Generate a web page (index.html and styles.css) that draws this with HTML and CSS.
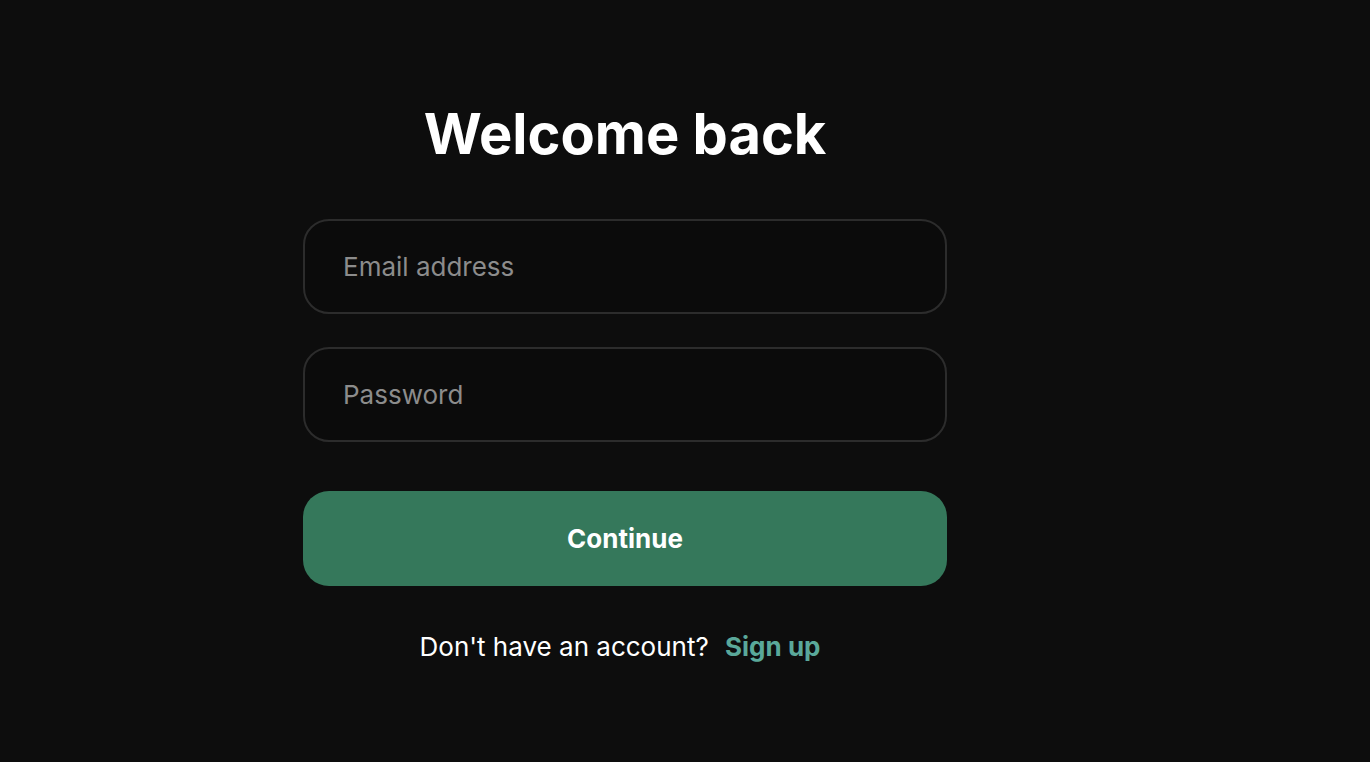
FILE: index.html
```html
<!DOCTYPE html>
<html lang="en">
<head>
<meta charset="utf-8">
<title>Welcome back</title>
<link rel="stylesheet" href="styles.css">
</head>
<body>
<main class="page">
  <form class="auth">
    <h1 class="auth-title">Welcome back</h1>
    <div class="fields">
      <input class="field" type="email" placeholder="Email address">
      <input class="field" type="password" placeholder="Password">
    </div>
    <button class="primary" type="button">Continue</button>
    <p class="switch">Don't have an account? <a class="switch-link" href="#">Sign up</a></p>
  </form>
</main>
</body>
</html>
```
FILE: styles.css
```css
* { box-sizing: border-box; }
html, body {
  margin: 0;
  height: 100%;
  background: #0d0d0d;
}
body {
  font-family: Inter, "Noto Sans", sans-serif;
  color: #ffffff;
}
.page {
  width: 1250px;
  display: flex;
  justify-content: center;
  padding-top: 98px;
}
.auth {
  width: 644px;
  display: flex;
  flex-direction: column;
  align-items: stretch;
}
.auth-title {
  margin: 0;
  text-align: center;
  font-size: 56px;
  line-height: 72px;
  font-weight: 700;
  letter-spacing: 0;
}
.fields {
  display: flex;
  flex-direction: column;
  gap: 33px;
  margin-top: 49px;
}
.field {
  height: 95px;
  border: 2px solid #2c2c2c;
  border-radius: 26px;
  background: #0b0b0b;
  padding: 0 0 0 38px;
  font-family: inherit;
  font-size: 26px;
  color: #ffffff;
  outline: none;
}
.field::placeholder { color: #8c8c8c; }
.primary {
  margin-top: 49px;
  height: 95px;
  border: none;
  border-radius: 26px;
  background: #35785b;
  color: #ffffff;
  font-family: inherit;
  font-size: 26px;
  font-weight: 700;
  cursor: pointer;
}
.switch {
  margin: 44px 0 0;
  padding-right: 10px;
  text-align: center;
  font-size: 26px;
  line-height: 34px;
}
.switch-link {
  margin-left: 9px;
  color: #5aa89a;
  font-weight: 700;
  text-decoration: none;
}
```
